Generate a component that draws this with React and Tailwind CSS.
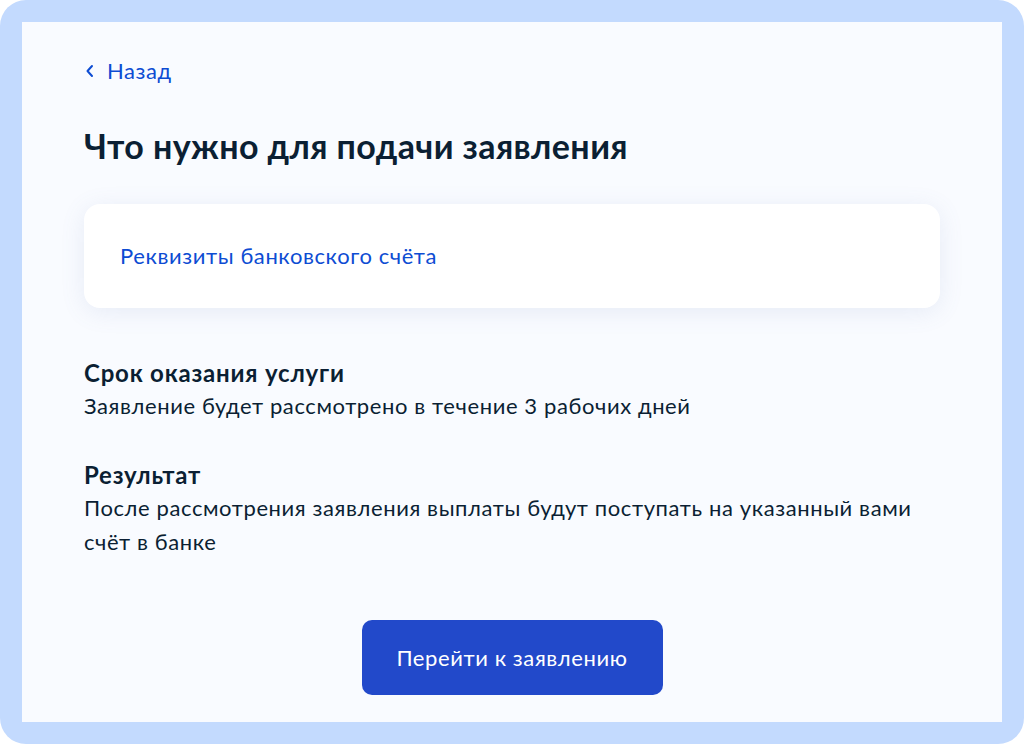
import React from "react";

const sections = [
    {
        title: "Срок оказания услуги",
        text: "Заявление будет рассмотрено в течение 3 рабочих дней",
    },
    {
        title: "Результат",
        text: "После рассмотрения заявления выплаты будут поступать на указанный вами счёт в банке",
    },
];

const BackArrow = () => (
    <svg width="10" height="14" viewBox="0 0 10 14" fill="none" className="shrink-0">
        <path d="M7 2L2.5 7L7 12" stroke="currentColor" strokeWidth="2" strokeLinecap="round" strokeLinejoin="round" />
    </svg>
);

export default function App() {
    return (
        <div className="w-[1024px] h-[744px] bg-white font-['Lato','Liberation_Sans',sans-serif]">
            <div className="w-full h-full bg-[#c3dafe] rounded-[26px] p-[22px]">
                <div className="h-full bg-[#f9fbff] px-[62px] pt-[35px] flex flex-col">
                    <a href="#" className="flex items-center gap-[12px] text-[#0d4cd3] text-[22px] leading-[28px] tracking-[0.6px] pl-[1px] w-fit">
                        <BackArrow />
                        <span>Назад</span>
                    </a>

                    <h1 className="mt-[41px] text-[34px] leading-[40px] tracking-[0.4px] font-bold text-[#0b1f33]">
                        Что нужно для подачи заявления
                    </h1>

                    <div className="mt-[38px] h-[104px] bg-white rounded-[16px] shadow-[0_4px_24px_rgba(98,120,180,0.12)] flex items-center px-[36px]">
                        <a href="#" className="text-[#0d4cd3] text-[22px] leading-[28px] tracking-[0.6px]">
                            Реквизиты банковского счёта
                        </a>
                    </div>

                    <div className="mt-[49px] flex flex-col gap-[36px]">
                        {sections.map(({ title, text }) => (
                            <div key={title}>
                                <h2 className="text-[24px] leading-[32px] tracking-[0.8px] font-bold text-[#0b1f33]">{title}</h2>
                                <p className="text-[22px] leading-[34px] tracking-[0.6px] text-[#0b1f33]">{text}</p>
                            </div>
                        ))}
                    </div>

                    <div className="mt-[61px] flex justify-center">
                        <button className="w-[301px] h-[75px] rounded-[10px] bg-[#2249ca] text-white text-[22px] tracking-[0.6px]">
                            Перейти к заявлению
                        </button>
                    </div>
                </div>
            </div>
        </div>
    );
}
